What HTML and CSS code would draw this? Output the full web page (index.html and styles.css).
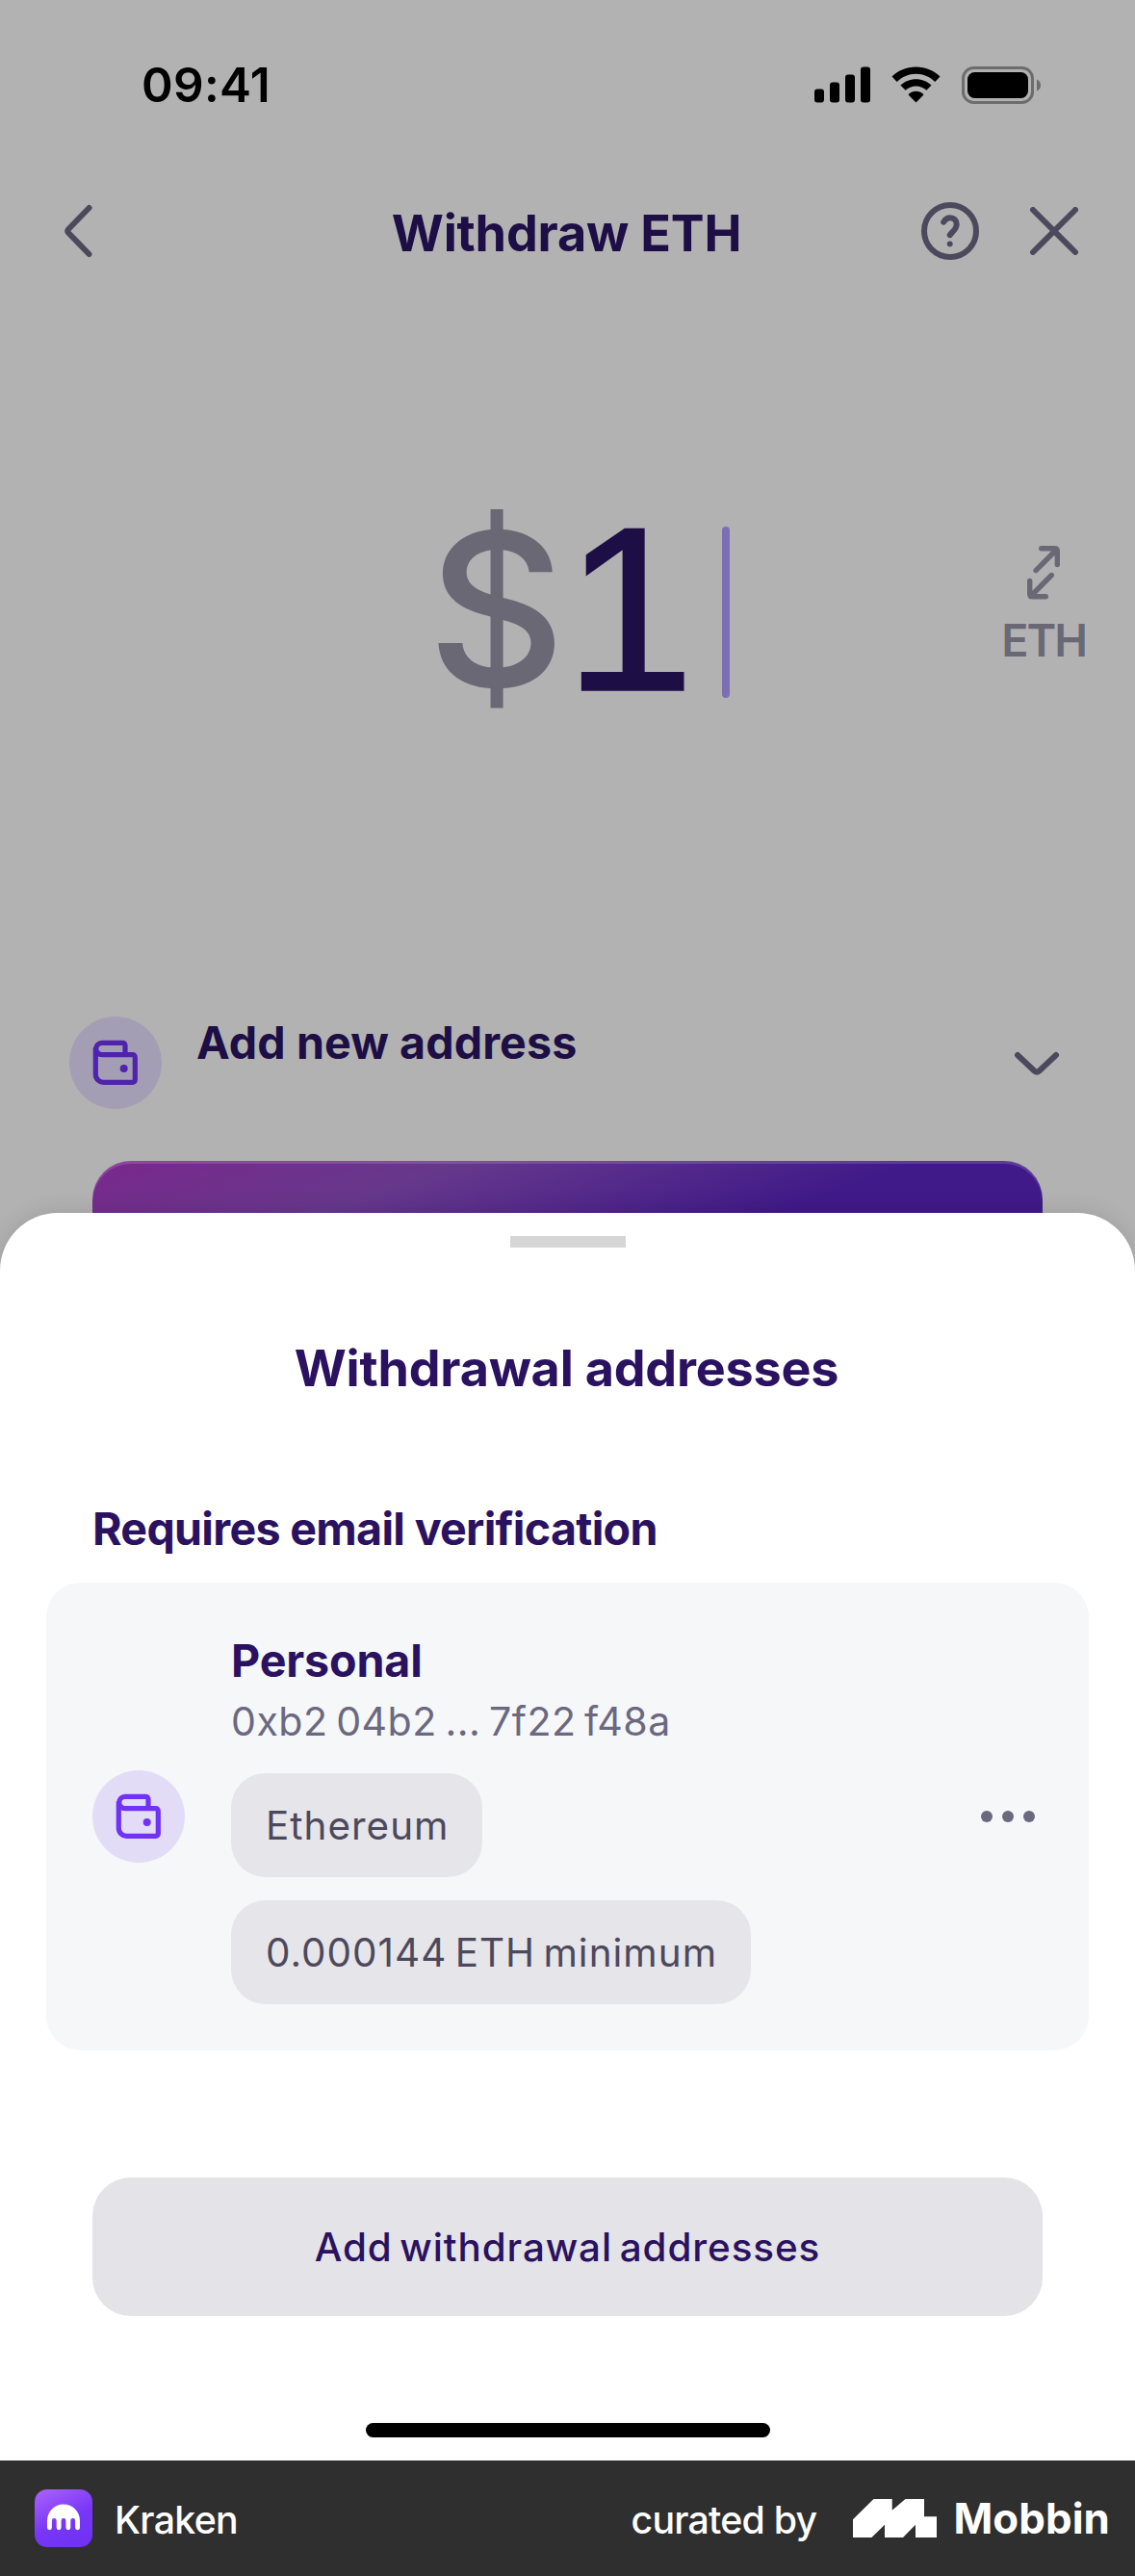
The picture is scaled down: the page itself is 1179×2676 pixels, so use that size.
FILE: index.html
```html
<!DOCTYPE html>
<html lang="en">
<head>
<meta charset="utf-8">
<title>Withdraw ETH</title>
<link rel="stylesheet" href="styles.css">
</head>
<body>
<svg class="defs" width="0" height="0" aria-hidden="true">
  <symbol id="wallet" viewBox="0 0 96 96">
    <path d="M58 39.7V29.8a2.5 2.5 0 0 0-2.5-2.5H34a6.2 6.2 0 0 0 0 12.4H65.800a2.500 2.500 0 0 1 2.500 2.500V65.800a2.500 2.500 0 0 1-2.500 2.500H35.300a8 8 0 0 1-8-8V33.500" fill="none" stroke="currentColor" stroke-width="5.2" stroke-linecap="round" stroke-linejoin="round"/>
    <circle cx="56.700" cy="54" r="4" fill="currentColor"/>
  </symbol>
</svg>
<div class="phone">
  <div class="status">
    <span class="time">09:41</span>
    <div class="status-icons">
      <svg width="58" height="38" viewBox="0 0 58 38">
        <rect x="0" y="23.500" width="10" height="14" rx="3"/>
        <rect x="16" y="16.500" width="10" height="21" rx="3"/>
        <rect x="32" y="8.500" width="10" height="29" rx="3"/>
        <rect x="48" y="0.500" width="10" height="37" rx="3"/>
      </svg>
      <svg width="51" height="38" viewBox="0 0 51 38">
        <path d="M25.500 0.500C35.200 0.500 44 4.300 50.500 10.500L45.300 16C40 10.900 33 7.800 25.500 7.800S11 10.900 5.700 16L0.500 10.500C7 4.300 15.800 0.500 25.500 0.500Z"/>
        <path d="M25.500 13.300C31.700 13.300 37.300 15.700 41.600 19.600L36.400 24.800C33.500 22.200 29.700 20.600 25.500 20.600S17.500 22.200 14.600 24.800L9.400 19.600C13.700 15.700 19.300 13.300 25.500 13.300Z"/>
        <path d="M25.500 25.800C28.400 25.800 31.100 26.900 33.200 28.800L33.200 29.800L25.500 37.500L17.800 29.800L17.800 28.800C19.900 26.900 22.600 25.800 25.500 25.800Z"/>
      </svg>
      <svg width="83" height="39" viewBox="0 0 83 39">
        <rect x="1.500" y="1.500" width="72" height="36" rx="11" fill="none" stroke="#6c6c6c" stroke-width="3"/>
        <rect x="6" y="6" width="63" height="27" rx="7.500"/>
        <path d="M78 13.500C80.500 14.500 82 16.700 82 19.500S80.500 24.500 78 25.500Z" fill="#6c6c6c"/>
      </svg>
    </div>
  </div>

  <header class="nav">
    <svg class="line back" width="30" height="56" viewBox="0 0 30 56"><path d="M26.500 4L5.200 26Q3.400 28 5.200 30L26.500 52"/></svg>
    <h1>Withdraw ETH</h1>
    <div class="nav-actions">
      <svg class="line" width="60" height="60" viewBox="0 0 60 60"><circle cx="30" cy="30" r="27"/><path d="M23.200 20.600C25 17.400 27.500 16.200 30 16.200C34 16.200 36.700 19.200 36.700 23C36.700 28.500 32 30.500 29.700 34.200"/><circle class="dot" cx="29.700" cy="43.400" r="3"/></svg>
      <svg class="line" width="50" height="50" viewBox="0 0 50 50"><path d="M3 3L47 47M47 3L3 47"/></svg>
    </div>
  </header>

  <section class="amount">
    <div class="value"><span class="currency">$</span><span class="digit">1</span><span class="caret"></span></div>
    <div class="swap">
      <svg width="38" height="58" viewBox="1066 566 38 58"><path d="M1077 592.700L1098.500 571M1082.700 569.700H1096.500Q1099.300 569.700 1099.300 572.500V586.500M1093.300 597.500L1071.500 619.500M1070.700 603.500V617Q1070.700 619.800 1073.500 619.800H1087.300"/></svg>
      <span>ETH</span>
    </div>
  </section>

  <section class="address-picker">
    <svg class="badge badge-dim" width="96" height="96"><use href="#wallet"/></svg>
    <span class="picker-label">Add new address</span>
    <svg class="line" width="48" height="28" viewBox="0 -2 48 28"><path d="M4 4L21.500 20.500Q24 22.800 26.500 20.500L44 4"/></svg>
  </section>
  <div class="cta"></div>

  <main class="sheet">
    <div class="handle"></div>
    <h2>Withdrawal addresses</h2>
    <h3>Requires email verification</h3>
    <article class="card">
      <svg class="badge" width="96" height="96"><use href="#wallet"/></svg>
      <div class="card-body">
        <strong>Personal</strong>
        <span class="hash">0xb2 04b2 ... 7f22 f48a</span>
        <span class="chip">Ethereum</span>
        <span class="chip">0.000144 ETH minimum</span>
      </div>
      <svg class="more" width="56" height="12" viewBox="0 0 56 12"><circle cx="6" cy="6" r="6"/><circle cx="28" cy="6" r="6"/><circle cx="50" cy="6" r="6"/></svg>
    </article>
    <button class="add">Add withdrawal addresses</button>
    <div class="home"></div>
  </main>
</div>

<footer class="credit">
  <svg width="60" height="60" viewBox="0 0 60 60">
    <defs><linearGradient id="kr" x1="0.100" y1="0" x2="0.600" y2="1"><stop offset="0" stop-color="#a960fb"/><stop offset="0.600" stop-color="#7837f6"/><stop offset="1" stop-color="#7132f5"/></linearGradient></defs>
    <rect width="60" height="60" rx="13" fill="url(#kr)"/>
    <path fill="#fff" d="M13 32.500A17 17 0 0 1 47 32.500V39.700A2.450 2.450 0 0 1 42.100 39.700V32.500A2.400 2.400 0 0 0 37.300 32.500V39.700A2.450 2.450 0 0 1 32.400 39.700V32.500A2.400 2.400 0 0 0 27.600 32.500V39.700A2.450 2.450 0 0 1 22.700 39.700V32.500A2.400 2.400 0 0 0 17.900 32.500V39.700A2.450 2.450 0 0 1 13 39.700Z"/>
  </svg>
  <span class="app">Kraken</span>
  <span class="by">curated by</span>
  <svg class="mark" width="87" height="40" viewBox="886 2596 87 40"><path fill="#fff" d="M886 2617.300L907.500 2596H926.700V2607.700L940.500 2596H960V2614.300H973V2636H951V2622.700L938 2636H919V2622.700L905.400 2636H886Z"/></svg>
  <span class="brand">Mobbin</span>
</footer>
</body>
</html>
```
FILE: styles.css
```css
* { box-sizing: border-box; margin: 0; padding: 0; }

body {
  width: 1179px;
  font-family: Inter, "Liberation Sans", sans-serif;
  background: #fff;
}

svg { display: block; flex: none; }
.defs { position: absolute; }

.phone {
  height: 2556px;
  display: flex;
  flex-direction: column;
  background: #b2b2b2;
  overflow: hidden;
}

/* Status bar */
.status {
  height: 176px;
  padding: 0 97px 0 147px;
  display: flex;
  align-items: center;
  justify-content: space-between;
}
.time { font-size: 49.5px; font-weight: 600; letter-spacing: 0.3px; line-height: 60px; }
.status-icons { display: flex; align-items: center; gap: 22px; }

/* Navigation */
.nav {
  height: 128px;
  padding: 0 59px 0 57px;
  display: grid;
  grid-template-columns: 1fr auto 1fr;
  align-items: center;
}
.back { margin-left: 9px; }
.nav h1 {
  padding-top: 4px;
  font-size: 52.2px;
  font-weight: 700;
  letter-spacing: -0.2px;
  line-height: 64px;
  color: #1d0e46;
}
.nav-actions { display: flex; align-items: center; justify-content: flex-end; gap: 53px; }
.line { fill: none; stroke: #4d495c; stroke-width: 6; stroke-linecap: round; stroke-linejoin: round; }
.line .dot { fill: #4d495c; stroke: none; }

/* Amount entry */
.amount {
  height: 658px;
  padding: 0 51px 0 444px;
  display: flex;
  align-items: center;
  justify-content: space-between;
}
.value { display: flex; align-items: center; height: 244px; line-height: 244px; }
.currency { width: 142px; font-size: 222px; font-weight: 500; color: #6b6876; }
.digit { width: 164px; font-family: "Liberation Sans", sans-serif; font-size: 244px; color: #1d0e46; -webkit-text-stroke: 1.5px #1d0e46; }
.caret { width: 8px; height: 178px; margin-top: 6px; border-radius: 4px; background: #7c6eb2; }
.swap {
  display: flex;
  flex-direction: column;
  align-items: center;
  gap: 13px;
  margin-bottom: 8px;
  font-size: 46.6px;
  font-weight: 600;
  letter-spacing: -2px;
  line-height: 56px;
  color: #6b6876;
}
.swap svg { fill: none; stroke: #6b6876; stroke-width: 5.4; stroke-linecap: round; stroke-linejoin: round; }

/* Address picker */
.address-picker {
  height: 96px;
  margin-top: 94px;
  padding: 0 78px 0 72px;
  display: flex;
  align-items: center;
}
.badge { border-radius: 50%; background: #e3dcf7; color: #7132f5; }
.badge-dim { background: #a39eb4; color: #4f23ab; }
.picker-label {
  flex: 1;
  align-self: flex-start;
  padding-left: 36px;
  font-size: 46.6px;
  font-weight: 700;
  letter-spacing: 0.1px;
  line-height: 54px;
  color: #1d0e46;
}
.cta {
  flex: none;
  height: 144px;
  margin: 54px 96px 0;
  border-radius: 40px;
  background: linear-gradient(160deg, #7a288c 0%, #66388c 28%, #401a88 62%, #401a88 100%);
  box-shadow: inset 0 3px 0 rgba(255, 255, 255, 0.14);
}

/* Bottom sheet */
.sheet {
  position: relative;
  flex: 1;
  margin-top: -90px;
  padding: 24px 48px 24px;
  display: flex;
  flex-direction: column;
  border-radius: 60px 60px 0 0;
  background: #fff;
  box-shadow: 0 0 24px rgba(0, 0, 0, 0.12);
}
.handle { align-self: center; width: 120px; height: 12px; background: #d6d6d6; }
h2 {
  margin-top: 94px;
  font-size: 52.1px;
  font-weight: 700;
  letter-spacing: -0.21px;
  line-height: 64px;
  text-align: center;
  text-indent: -2px;
  color: #2a1260;
}
h3 {
  margin: 106px 0 28px 48px;
  font-size: 46.6px;
  font-weight: 700;
  letter-spacing: -0.7px;
  line-height: 56px;
  color: #2a1260;
}
.card {
  height: 486px;
  padding: 48px 56px 48px 48px;
  display: flex;
  align-items: center;
  gap: 48px;
  border-radius: 36px;
  background: #f5f7f9;
}
.card-body { flex: 1; display: flex; flex-direction: column; align-items: flex-start; }
.card-body strong { font-size: 46.6px; font-weight: 700; letter-spacing: -0.15px; line-height: 66px; color: #2a1260; }
.hash { font-size: 41.1px; letter-spacing: 0.5px; word-spacing: -3.5px; line-height: 60px; color: #6b6880; }
.chip {
  height: 108px;
  margin-top: 24px;
  padding: 1px 35px 0 36px;
  border-radius: 36px;
  background: #e6e5ea;
  font-size: 40.4px;
  letter-spacing: 1.02px;
  word-spacing: -4px;
  line-height: 108px;
  color: #4d495c;
}
.more { fill: #6b6880; }
.add {
  height: 144px;
  margin: 132px 48px 0;
  padding-top: 1px;
  border: 0;
  border-radius: 40px;
  background: #e4e3e8;
  font: 500 40.4px/143px Inter, "Liberation Sans", sans-serif;
  letter-spacing: 0.9px;
  word-spacing: -4px;
  color: #2a1260;
}
.home { align-self: center; width: 420px; height: 15px; margin-top: 111px; border-radius: 8px; background: #000; }

/* Credit bar */
.credit {
  height: 120px;
  padding: 0 26px 0 36px;
  display: flex;
  align-items: center;
  background: #2f2f2f;
  color: #fff;
  font-size: 39.3px;
  font-weight: 500;
  line-height: 48px;
}
.app { flex: 1; padding: 3px 0 0 23px; letter-spacing: -0.7px; }
.by { padding-top: 3px; letter-spacing: -0.78px; }
.mark { margin: 0 17px 0 38px; }
.brand { padding-top: 2px; font-size: 43.8px; font-weight: 700; letter-spacing: 0.1px; }
```
